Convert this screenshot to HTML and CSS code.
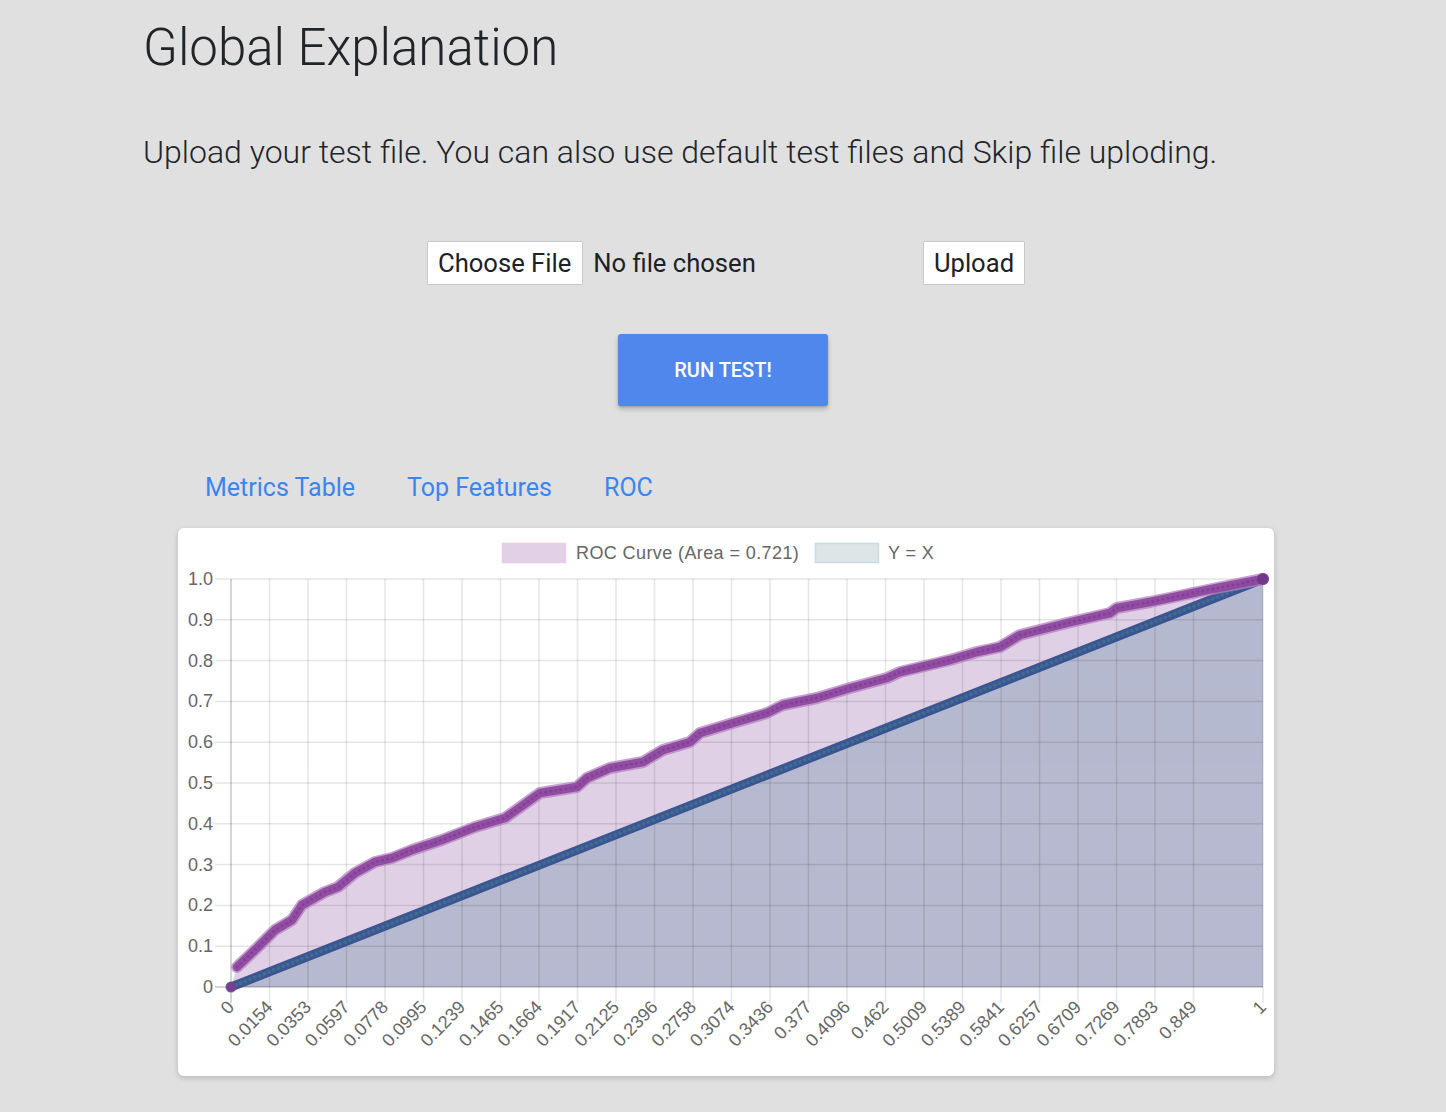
FILE: index.html
```html
<!DOCTYPE html>
<html lang="en">
<head>
<meta charset="utf-8">
<title>Global Explanation</title>
<link rel="stylesheet" href="styles.css">
</head>
<body>
<div class="container">
  <h1 class="title">Global Explanation</h1>
  <p class="lead">Upload your test file. You can also use default test files and Skip file uploding.</p>
  <form class="upload-row">
    <div class="file-input">
      <span class="file-btn">Choose File</span>
      <span class="file-name">No file chosen</span>
    </div>
    <button type="button" class="upload-btn">Upload</button>
  </form>
  <div class="run-row">
    <button type="button" class="run-btn">RUN TEST!</button>
  </div>
  <nav class="tabs">
    <a class="tab" href="#">Metrics Table</a>
    <a class="tab" href="#">Top Features</a>
    <a class="tab" href="#">ROC</a>
  </nav>
  <div class="card">
    <svg class="chart" width="1096" height="548" viewBox="0 0 1096 548" xmlns="http://www.w3.org/2000/svg">
      <!-- legend -->
      <rect x="324.5" y="15.5" width="63" height="19" fill="#e1d0e6" stroke="#ebcbe9" stroke-width="1.5"/>
      <text class="legend-text" x="398" y="25">ROC Curve (Area = 0.721)</text>
      <rect x="637.5" y="15.5" width="63" height="19" fill="#dce6e7" stroke="#c9dbe1" stroke-width="1.5"/>
      <text class="legend-text" x="710" y="25">Y = X</text>

      <!-- fills -->
      <polygon fill="#e0d0e5" points="53,459 59,439 80,419 97,402 114,392 124,377 147,364 160,359 177,345 197,334 214,330 234,322 264,312 297,299 327,290 362,265 399,259 409,250 432,240 465,234 485,222 512,214 522,205 555,195 589,185 605,177 639,170 672,160 709,150 722,144 772,132 799,124 822,119 842,107 889,95 932,85 939,80 972,74 1015,65 1039,60 1085,51 1085,459"/>
      <polygon fill="#b6b9cf" points="53,459 1085,51 1085,459"/>

      <!-- grid -->
      <g class="grid">
        <line x1="37" y1="51" x2="1085" y2="51"/>
        <line x1="37" y1="91.8" x2="1085" y2="91.8"/>
        <line x1="37" y1="132.6" x2="1085" y2="132.6"/>
        <line x1="37" y1="173.4" x2="1085" y2="173.4"/>
        <line x1="37" y1="214.2" x2="1085" y2="214.2"/>
        <line x1="37" y1="255" x2="1085" y2="255"/>
        <line x1="37" y1="295.8" x2="1085" y2="295.8"/>
        <line x1="37" y1="336.6" x2="1085" y2="336.6"/>
        <line x1="37" y1="377.4" x2="1085" y2="377.4"/>
        <line x1="37" y1="418.2" x2="1085" y2="418.2"/>
        <line x1="91.5" y1="51" x2="91.5" y2="475"/>
        <line x1="130" y1="51" x2="130" y2="475"/>
        <line x1="168.5" y1="51" x2="168.5" y2="475"/>
        <line x1="207" y1="51" x2="207" y2="475"/>
        <line x1="245.5" y1="51" x2="245.5" y2="475"/>
        <line x1="284" y1="51" x2="284" y2="475"/>
        <line x1="322.5" y1="51" x2="322.5" y2="475"/>
        <line x1="361" y1="51" x2="361" y2="475"/>
        <line x1="399.5" y1="51" x2="399.5" y2="475"/>
        <line x1="438" y1="51" x2="438" y2="475"/>
        <line x1="476.5" y1="51" x2="476.5" y2="475"/>
        <line x1="515" y1="51" x2="515" y2="475"/>
        <line x1="553.5" y1="51" x2="553.5" y2="475"/>
        <line x1="592" y1="51" x2="592" y2="475"/>
        <line x1="630.5" y1="51" x2="630.5" y2="475"/>
        <line x1="669" y1="51" x2="669" y2="475"/>
        <line x1="707.5" y1="51" x2="707.5" y2="475"/>
        <line x1="746" y1="51" x2="746" y2="475"/>
        <line x1="784.5" y1="51" x2="784.5" y2="475"/>
        <line x1="823" y1="51" x2="823" y2="475"/>
        <line x1="861.5" y1="51" x2="861.5" y2="475"/>
        <line x1="900" y1="51" x2="900" y2="475"/>
        <line x1="938.5" y1="51" x2="938.5" y2="475"/>
        <line x1="977" y1="51" x2="977" y2="475"/>
        <line x1="1015.5" y1="51" x2="1015.5" y2="475"/>
        <line x1="1085" y1="51" x2="1085" y2="475"/>
      </g>
      <g class="axis">
        <line x1="53" y1="51" x2="53" y2="475"/>
        <line x1="37" y1="459" x2="1085" y2="459"/>
      </g>

      <!-- y labels -->
      <g class="tick-text">
        <text x="35" y="51">1.0</text>
        <text x="35" y="91.8">0.9</text>
        <text x="35" y="132.6">0.8</text>
        <text x="35" y="173.4">0.7</text>
        <text x="35" y="214.2">0.6</text>
        <text x="35" y="255">0.5</text>
        <text x="35" y="295.8">0.4</text>
        <text x="35" y="336.6">0.3</text>
        <text x="35" y="377.4">0.2</text>
        <text x="35" y="418.2">0.1</text>
        <text x="35" y="459">0</text>
      </g>

      <!-- x labels -->
      <g class="tick-text">
        <text transform="translate(53 476) rotate(-46)">0</text>
        <text transform="translate(91.5 476) rotate(-46)">0.0154</text>
        <text transform="translate(130 476) rotate(-46)">0.0353</text>
        <text transform="translate(168.5 476) rotate(-46)">0.0597</text>
        <text transform="translate(207 476) rotate(-46)">0.0778</text>
        <text transform="translate(245.5 476) rotate(-46)">0.0995</text>
        <text transform="translate(284 476) rotate(-46)">0.1239</text>
        <text transform="translate(322.5 476) rotate(-46)">0.1465</text>
        <text transform="translate(361 476) rotate(-46)">0.1664</text>
        <text transform="translate(399.5 476) rotate(-46)">0.1917</text>
        <text transform="translate(438 476) rotate(-46)">0.2125</text>
        <text transform="translate(476.5 476) rotate(-46)">0.2396</text>
        <text transform="translate(515 476) rotate(-46)">0.2758</text>
        <text transform="translate(553.5 476) rotate(-46)">0.3074</text>
        <text transform="translate(592 476) rotate(-46)">0.3436</text>
        <text transform="translate(630.5 476) rotate(-46)">0.377</text>
        <text transform="translate(669 476) rotate(-46)">0.4096</text>
        <text transform="translate(707.5 476) rotate(-46)">0.462</text>
        <text transform="translate(746 476) rotate(-46)">0.5009</text>
        <text transform="translate(784.5 476) rotate(-46)">0.5389</text>
        <text transform="translate(823 476) rotate(-46)">0.5841</text>
        <text transform="translate(861.5 476) rotate(-46)">0.6257</text>
        <text transform="translate(900 476) rotate(-46)">0.6709</text>
        <text transform="translate(938.5 476) rotate(-46)">0.7269</text>
        <text transform="translate(977 476) rotate(-46)">0.7893</text>
        <text transform="translate(1015.5 476) rotate(-46)">0.849</text>
        <text transform="translate(1085 476) rotate(-46)">1</text>
      </g>

      <!-- Y = X line -->
      <line x1="53" y1="459" x2="1085" y2="51" stroke="#34508f" stroke-width="9" stroke-linecap="round" opacity="0.95"/>
      <line x1="53" y1="459" x2="1085" y2="51" stroke="#416f8f" stroke-width="4" stroke-linecap="round" stroke-dasharray="0.1 5" opacity="0.85"/>

      <!-- ROC curve -->
      <circle cx="53" cy="459" r="5.5" fill="#7a3c90" opacity="0.85"/>
      <polyline fill="none" stroke="#b482c0" stroke-width="12" stroke-linejoin="round" stroke-linecap="round" opacity="0.75" points="59,439 80,419 97,402 114,392 124,377 147,364 160,359 177,345 197,334 214,330 234,322 264,312 297,299 327,290 362,265 399,259 409,250 432,240 465,234 485,222 512,214 522,205 555,195 589,185 605,177 639,170 672,160 709,150 722,144 772,132 799,124 822,119 842,107 889,95 932,85 939,80 972,74 1015,65 1039,60 1085,51"/>
      <polyline fill="none" stroke="#8c459c" stroke-width="8.5" stroke-linejoin="round" stroke-linecap="round" opacity="0.9" points="59,439 80,419 97,402 114,392 124,377 147,364 160,359 177,345 197,334 214,330 234,322 264,312 297,299 327,290 362,265 399,259 409,250 432,240 465,234 485,222 512,214 522,205 555,195 589,185 605,177 639,170 672,160 709,150 722,144 772,132 799,124 822,119 842,107 889,95 932,85 939,80 972,74 1015,65 1039,60 1085,51"/>
      <polyline fill="none" stroke="#7a3590" stroke-width="3" stroke-linejoin="round" stroke-linecap="round" stroke-dasharray="0.1 5" opacity="0.55" points="59,439 80,419 97,402 114,392 124,377 147,364 160,359 177,345 197,334 214,330 234,322 264,312 297,299 327,290 362,265 399,259 409,250 432,240 465,234 485,222 512,214 522,205 555,195 589,185 605,177 639,170 672,160 709,150 722,144 772,132 799,124 822,119 842,107 889,95 932,85 939,80 972,74 1015,65 1039,60 1085,51"/>
      <circle cx="1085" cy="51" r="6" fill="#6e3488" opacity="0.9"/>
    </svg>
  </div>
</div>
</body>
</html>
```

FILE: styles.css
```css
* {
  box-sizing: border-box;
}

body {
  margin: 0;
  background: #e0e0e0;
  font-family: Roboto, "Liberation Sans", Arial, sans-serif;
  color: #212529;
}

.container {
  width: 1160px;
  margin: 0 auto;
  padding-top: 16px;
  padding-bottom: 36px;
}

.title {
  margin: 0;
  font-size: 51px;
  font-weight: 300;
  line-height: 64px;
}

.lead {
  margin: 52px 0 0;
  font-size: 32px;
  font-weight: 300;
  line-height: 40px;
}

.upload-row {
  display: flex;
  justify-content: center;
  align-items: center;
  gap: 12px;
  margin: 69px 0 0;
  padding-left: 6px;
}

.file-input {
  display: flex;
  align-items: center;
  width: 484px;
  font-size: 25.6px;
  color: #202124;
}

.file-btn {
  display: flex;
  align-items: center;
  height: 44px;
  padding: 0 11px 0 10px;
  background: #fff;
  border: 1px solid #c9c9c9;
  border-radius: 1px;
}

.file-name {
  margin-left: 10px;
}

.upload-btn {
  height: 44px;
  width: 102px;
  padding: 0;
  background: #fff;
  border: 1px solid #c9c9c9;
  border-radius: 1px;
  font-family: Roboto, sans-serif;
  font-size: 25.6px;
  color: #202124;
}

.run-row {
  display: flex;
  justify-content: center;
  margin-top: 49px;
}

.run-btn {
  width: 210px;
  height: 72px;
  background: #5087ec;
  color: #fff;
  border: none;
  border-radius: 3px;
  font-family: Roboto, sans-serif;
  font-size: 20px;
  font-weight: 500;
  box-shadow: 0 3px 5px rgba(0, 0, 0, 0.22), 0 1px 2px rgba(0, 0, 0, 0.12);
}

.tabs {
  display: flex;
  margin: 67px 0 0 36px;
}

.tab {
  padding: 0 26px;
  font-size: 25px;
  line-height: 30px;
  color: #3c85f0;
  text-decoration: none;
}

.card {
  width: 1096px;
  height: 548px;
  margin: 25px 0 0 35px;
  background: #fff;
  border-radius: 6px;
  box-shadow: 0 2px 6px rgba(0, 0, 0, 0.18);
  overflow: hidden;
}

.chart {
  display: block;
}

.legend-text {
  font-family: "Liberation Sans", Arial, sans-serif;
  font-size: 18px;
  letter-spacing: 0.4px;
  fill: #666;
  dominant-baseline: central;
}

.grid line {
  stroke: rgba(0, 0, 0, 0.1);
  stroke-width: 1.5;
}

.axis line {
  stroke: rgba(0, 0, 0, 0.22);
  stroke-width: 1.5;
}

.tick-text text {
  font-family: "Liberation Sans", Arial, sans-serif;
  font-size: 18px;
  fill: #666;
  dominant-baseline: central;
  text-anchor: end;
}
```
